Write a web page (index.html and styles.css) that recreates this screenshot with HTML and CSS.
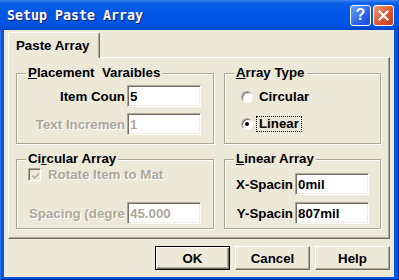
FILE: index.html
```html
<!DOCTYPE html>
<html lang="en">
<head>
    <meta charset="UTF-8">
    <meta name="viewport" content="width=device-width, initial-scale=1.0">
    <title>Setup Paste Array</title>
    <link rel="stylesheet" href="styles.css">
</head>
<body>
    <div class="window">
        <div class="titlebar">
            <span class="title">Setup Paste Array</span>
            <div class="caption-buttons">
                <span class="cap-btn cap-help">?</span>
                <span class="cap-btn cap-close">
                    <svg width="11" height="11" viewBox="0 0 11 11">
                        <path d="M1.5 1.5 L9.5 9.5 M9.5 1.5 L1.5 9.5" stroke="#fff" stroke-width="2.2" stroke-linecap="square"/>
                    </svg>
                </span>
            </div>
        </div>
        <div class="client">
            <div class="tabs">
                <div class="tab active">Paste Array</div>
            </div>
            <div class="tab-panel">
                <fieldset class="group placement">
                    <legend><u>P</u>lacement&nbsp; Varaibles</legend>
                    <div class="field-grid">
                        <label for="item-count">Item Coun</label>
                        <input type="text" id="item-count" value="5">
                        <label for="text-increment" class="disabled">Text Incremen</label>
                        <input type="text" id="text-increment" value="1" disabled>
                    </div>
                </fieldset>
                <fieldset class="group array-type">
                    <legend><u>A</u>rray Type</legend>
                    <div class="radio-list">
                        <div class="radio-row">
                            <span class="radio"></span>
                            <span class="radio-label">Circular</span>
                        </div>
                        <div class="radio-row">
                            <span class="radio checked"></span>
                            <span class="radio-label focused">Linear</span>
                        </div>
                    </div>
                </fieldset>
                <fieldset class="group circular">
                    <legend>Ci<u>r</u>cular Array</legend>
                    <div class="check-row disabled">
                        <span class="checkbox">
                            <svg width="9" height="9" viewBox="0 0 9 9">
                                <path d="M1 3.5 L3.5 6 L8 1.5 L8 3.5 L3.5 8 L1 5.5 Z" fill="#aca899"/>
                            </svg>
                        </span>
                        <span>Rotate Item to Mat</span>
                    </div>
                    <div class="field-grid spacing">
                        <label for="spacing-deg" class="disabled">Spacing (degre</label>
                        <input type="text" id="spacing-deg" value="45.000" disabled>
                    </div>
                </fieldset>
                <fieldset class="group linear">
                    <legend><u>L</u>inear Array</legend>
                    <div class="field-grid narrow">
                        <label for="x-spacing">X-Spacin</label>
                        <input type="text" id="x-spacing" value="0mil">
                        <label for="y-spacing">Y-Spacin</label>
                        <input type="text" id="y-spacing" value="807mil">
                    </div>
                </fieldset>
            </div>
            <div class="dialog-buttons">
                <button type="button" class="default">OK</button>
                <button type="button">Cancel</button>
                <button type="button">Help</button>
            </div>
        </div>
    </div>
</body>
</html>
```

FILE: styles.css
```css
body {
    margin: 0;
    background: #0855dd;
    font-family: "Liberation Sans", Arial, sans-serif;
    font-size: 13.3px;
    font-weight: bold;
    color: #000;
}
.window {
    width: 399px;
    height: 280px;
    display: flex;
    flex-direction: column;
    background: #0855dd;
    box-shadow: inset 1px 0 0 #2a6ff0, inset -1px -1px 0 #002a9e;
}
.titlebar {
    height: 30px;
    flex: none;
    display: flex;
    align-items: center;
    justify-content: space-between;
    padding: 0 5px 0 7px;
    background: linear-gradient(#3d86f6 0, #0a5fe8 3px, #0057e6 12px, #0055e3 22px, #0050dc 27px, #0041c4 30px);
}
.title {
    font-family: "DejaVu Sans Mono", "Liberation Mono", monospace;
    font-size: 13.3px;
    font-weight: bold;
    color: #fff;
    text-shadow: 1px 1px 0 #0c2080;
}
.caption-buttons {
    display: flex;
    gap: 2px;
}
.cap-btn {
    width: 21px;
    height: 21px;
    box-sizing: border-box;
    border: 1px solid #fff;
    border-radius: 3px;
    display: flex;
    align-items: center;
    justify-content: center;
}
.cap-help {
    background: linear-gradient(135deg, #6ea2fa, #2a62e8 60%, #1a4cd2);
    color: #fff;
    font-size: 16px;
    font-weight: bold;
}
.cap-close {
    background: linear-gradient(135deg, #f09a7c, #e0552f 55%, #c53b1c);
}
.client {
    flex: 1;
    margin: 0 5px 3px 4px;
    padding: 2px 4px 0;
    background: #ece9d8;
}
.tabs {
    display: flex;
}
.tab {
    width: 92px;
    height: 26px;
    box-sizing: border-box;
    padding-left: 7px;
    line-height: 25px;
    border: 1px solid;
    border-bottom: 0;
    border-color: #fff #716f64 transparent #fff;
    border-radius: 2px 2px 0 0;
    box-shadow: inset -1px 0 0 #aca899;
    background: #ece9d8;
    margin-bottom: -1px;
    position: relative;
    z-index: 1;
}
.tab-panel {
    display: grid;
    grid-template-columns: 198px 157px;
    grid-template-rows: 78px 77px;
    column-gap: 10px;
    row-gap: 8px;
    padding: 8px 7px 9px 7px;
    border: 1px solid;
    border-color: #fff #716f64 #716f64 #fff;
    box-shadow: inset -1px -1px 0 #aca899;
}
.group {
    margin: 0;
    padding: 0;
    min-width: 0;
    border: 1px solid #aca899;
    box-shadow: inset 1px 1px 0 #fff, 1px 1px 0 #fff;
}
.group legend {
    margin-left: 9px;
    padding: 0 2px;
    line-height: 14px;
    background: #ece9d8;
}
.field-grid {
    display: grid;
    grid-template-columns: 108px 74px;
    grid-auto-rows: 22px;
    column-gap: 2px;
    row-gap: 6px;
    align-items: center;
}
.field-grid label {
    justify-self: end;
    white-space: nowrap;
}
.placement .field-grid {
    padding-top: 5px;
}
.linear .field-grid {
    grid-template-columns: 68px 74px;
    row-gap: 7px;
    padding-top: 7px;
}
.circular .spacing {
    margin-top: 21px;
}
input {
    width: 74px;
    height: 22px;
    box-sizing: border-box;
    margin: 0;
    padding: 0 2px;
    font: inherit;
    color: #000;
    background: #fff;
    border: 1px solid;
    border-color: #aca899 #fff #fff #aca899;
    box-shadow: inset 1px 1px 0 #716f64, inset -1px -1px 0 #f1efe2;
    outline: none;
}
input:disabled {
    color: #aca899;
    background: #fff;
}
.disabled {
    color: #aca899;
    text-shadow: 1px 1px 0 #fff;
}
.radio-list {
    display: flex;
    flex-direction: column;
    gap: 11px;
    padding: 9px 0 0 16px;
}
.radio-row {
    display: flex;
    align-items: center;
    height: 16px;
    gap: 3px;
}
.radio {
    width: 12px;
    height: 12px;
    box-sizing: border-box;
    border-radius: 50%;
    border: 1px solid;
    border-color: #aca899 #fff #fff #aca899;
    background: #fff;
    box-shadow: inset 1px 1px 0 #716f64;
    display: flex;
    align-items: center;
    justify-content: center;
}
.radio.checked::after {
    content: "";
    width: 4px;
    height: 4px;
    border-radius: 50%;
    background: #000;
}
.radio-label {
    padding: 0 2px;
    line-height: 14px;
    border: 1px solid transparent;
}
.radio-label.focused {
    border: 1px dotted #000;
}
.check-row {
    display: flex;
    align-items: center;
    gap: 7px;
    height: 13px;
    padding: 2px 0 0 11px;
}
.checkbox {
    width: 13px;
    height: 13px;
    box-sizing: border-box;
    border: 1px solid;
    border-color: #aca899 #fff #fff #aca899;
    box-shadow: inset 1px 1px 0 #716f64;
    background: #ece9d8;
    display: flex;
    align-items: center;
    justify-content: center;
    padding: 1px 0 0 1px;
}
.dialog-buttons {
    display: flex;
    justify-content: flex-end;
    gap: 5px;
    margin-top: 7px;
}
button {
    width: 75px;
    height: 24px;
    margin: 0;
    padding: 0;
    font: inherit;
    color: #000;
    background: #ece9d8;
    border: 1px solid;
    border-color: #fff #716f64 #716f64 #fff;
    box-shadow: inset -1px -1px 0 #aca899;
}
button.default {
    border-color: #000;
    box-shadow: inset 1px 1px 0 #fff, inset -1px -1px 0 #716f64, inset -2px -2px 0 #aca899;
}
```
